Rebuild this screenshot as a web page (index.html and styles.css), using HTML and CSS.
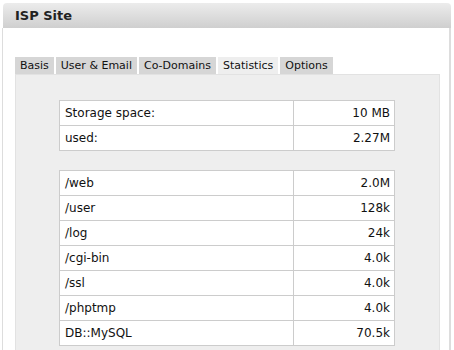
FILE: index.html
```html
<!DOCTYPE html>
<html lang="en">
<head>
    <meta charset="UTF-8">
    <title>ISP Site</title>
    <link rel="stylesheet" href="styles.css">
</head>
<body>
    <div class="site">
        <div class="site-title">ISP Site</div>
        <div class="site-body">
            <div class="tabs">
                <span class="tab">Basis</span>
                <span class="tab">User &amp; Email</span>
                <span class="tab">Co-Domains</span>
                <span class="tab active">Statistics</span>
                <span class="tab">Options</span>
            </div>
            <div class="panel">
                <table class="stats">
                    <tr><td>Storage space:</td><td class="num">10 MB</td></tr>
                    <tr><td>used:</td><td class="num">2.27M</td></tr>
                </table>
                <table class="stats">
                    <tr><td>/web</td><td class="num">2.0M</td></tr>
                    <tr><td>/user</td><td class="num">128k</td></tr>
                    <tr><td>/log</td><td class="num">24k</td></tr>
                    <tr><td>/cgi-bin</td><td class="num">4.0k</td></tr>
                    <tr><td>/ssl</td><td class="num">4.0k</td></tr>
                    <tr><td>/phptmp</td><td class="num">4.0k</td></tr>
                    <tr><td>DB::MySQL</td><td class="num">70.5k</td></tr>
                </table>
            </div>
        </div>
    </div>
</body>
</html>
```

FILE: styles.css
```css
body {
    margin: 0;
    background-color: #fff;
    font-family: "DejaVu Sans", Verdana, sans-serif;
    color: #111;
    overflow: hidden;
}
.site {
    margin: 3px 3px 0 2px;
}
.site-title {
    height: 25px;
    line-height: 25px;
    padding-left: 12px;
    margin-left: 1px;
    font-size: 13px;
    font-weight: bold;
    color: #222;
    background: linear-gradient(#ececec, #cfcfcf);
    border-radius: 4px 4px 0 0;
}
.site-body {
    border-left: 1px solid #ddd;
    border-right: 2px solid #ddd;
    padding: 29px 9px 0 12px;
    height: 293px;
}
.tabs {
    display: flex;
    gap: 2px;
    height: 17px;
}
.tab {
    padding: 0 5px;
    font-size: 11px;
    line-height: 18px;
    background-color: #d6d6d6;
}
.tab.active {
    background-color: #eeeeee;
}
.panel {
    background-color: #eeeeee;
    border: 1px solid #e2e2e2;
    border-bottom: none;
    padding: 25px 0 0 43px;
    height: 251px;
}
.stats {
    border-collapse: collapse;
    width: 336px;
    margin-bottom: 19px;
    background-color: #fff;
    font-size: 12px;
}
.stats td {
    border: 1px solid #cccccc;
    height: 24px;
    padding: 0 4px 0 5px;
}
.stats td:first-child {
    width: 224px;
}
.stats .num {
    text-align: right;
}
```
